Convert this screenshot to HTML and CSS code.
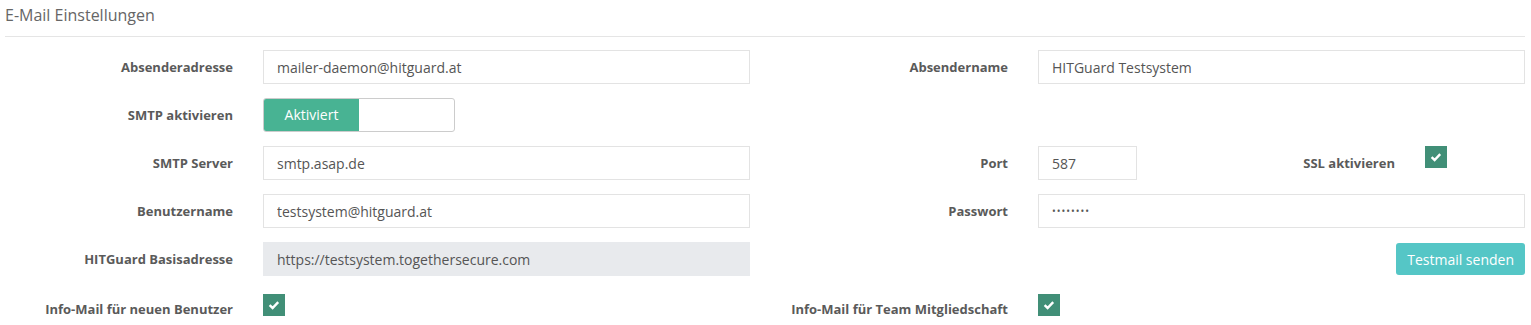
FILE: index.html
```html
<!DOCTYPE html>
<html>
<head>
  <title>E-Mail Einstellungen</title>
  <link rel="stylesheet" href="styles.css">
</head>
<body>

  <!-- Section header -->
  <div class="section-head">
    <h2>E-Mail Einstellungen</h2>
  </div>

  <div class="form">
    <div class="row">
      <div class="half">
        <label class="lbl">Absenderadresse</label>
        <input class="field" type="text" value="mailer-daemon@hitguard.at">
      </div>
      <div class="half">
        <label class="lbl">Absendername</label>
        <input class="field" type="text" value="HITGuard Testsystem">
      </div>
    </div>

    <div class="row">
      <div class="half">
        <label class="lbl">SMTP aktivieren</label>
        <div class="toggle">
          <span class="toggle-on">Aktiviert</span>
          <span class="toggle-off"></span>
        </div>
      </div>
    </div>

    <div class="row">
      <div class="half">
        <label class="lbl">SMTP Server</label>
        <input class="field" type="text" value="smtp.asap.de">
      </div>
      <div class="half">
        <label class="lbl">Port</label>
        <div class="port-line">
          <input class="field port" type="text" value="587">
          <label class="lbl ssl">SSL aktivieren</label>
          <div class="check-cell"><span class="check">
            <svg viewBox="0 0 14 14" width="14" height="14"><path d="M2.6 7.2 L5.6 10 L11.2 4.2" fill="none" stroke="#fff" stroke-width="2.4"/></svg>
          </span></div>
        </div>
      </div>
    </div>

    <div class="row">
      <div class="half">
        <label class="lbl">Benutzername</label>
        <input class="field" type="text" value="testsystem@hitguard.at">
      </div>
      <div class="half">
        <label class="lbl">Passwort</label>
        <input class="field pw" type="password" value="geheim12">
      </div>
    </div>

    <div class="row">
      <div class="half">
        <label class="lbl">HITGuard Basisadresse</label>
        <input class="field readonly" type="text" value="https://testsystem.togethersecure.com" readonly>
      </div>
      <div class="half">
        <span></span>
        <div class="btn-cell"><button class="btn-test">Testmail senden</button></div>
      </div>
    </div>

    <div class="row last">
      <div class="half">
        <label class="lbl">Info-Mail für neuen Benutzer</label>
        <div><span class="check">
          <svg viewBox="0 0 14 14" width="14" height="14"><path d="M2.6 7.2 L5.6 10 L11.2 4.2" fill="none" stroke="#fff" stroke-width="2.4"/></svg>
        </span></div>
      </div>
      <div class="half">
        <label class="lbl">Info-Mail für Team Mitgliedschaft</label>
        <div><span class="check">
          <svg viewBox="0 0 14 14" width="14" height="14"><path d="M2.6 7.2 L5.6 10 L11.2 4.2" fill="none" stroke="#fff" stroke-width="2.4"/></svg>
        </span></div>
      </div>
    </div>
  </div>

</body>
</html>
```

FILE: styles.css
```css
body {
  margin: 0;
  background: #fff;
  font-family: "Open Sans", sans-serif;
  color: #555;
  overflow: hidden;
}

/* Header */
.section-head {
  margin: 0 6px 0 5px;
  border-bottom: 1px solid #e5e5e5;
  padding: 3px 0 9px;
}

.section-head h2 {
  margin: 0;
  font-size: 16px;
  font-weight: 400;
  line-height: 24px;
  color: #666;
}

/* Form grid */
.form {
  padding-top: 13px;
}

.row {
  display: flex;
  gap: 25px;
  margin-bottom: 14px;
}

.row.last {
  margin-top: 18px;
}

.half {
  display: grid;
  grid-template-columns: 263px 487px;
  align-items: center;
}

.half + .half {
  width: 750px;
}

.lbl {
  text-align: right;
  padding-right: 30px;
  font-size: 13px;
  font-weight: 700;
  color: #5a5a5a;
}

.row.last .half {
  align-items: start;
}

.row.last .lbl {
  padding-top: 6px;
  line-height: 18px;
}

.field {
  box-sizing: border-box;
  height: 34px;
  width: 100%;
  border: 1px solid #e3e3e3;
  border-radius: 0;
  padding: 0 13px;
  font-family: "Open Sans", sans-serif;
  font-size: 14px;
  color: #555;
  outline: none;
}

.field.readonly {
  background: #e8eaed;
  border-color: #e8eaed;
}

.field.pw {
  font-size: 10px;
  letter-spacing: 1px;
}

/* Port + SSL line */
.port-line {
  display: flex;
  align-items: center;
}

.field.port {
  width: 99px;
  flex: none;
}

.lbl.ssl {
  flex: 1;
}

.check-cell {
  width: 100px;
  align-self: flex-start;
}

/* Toggle */
.toggle {
  display: flex;
  width: 192px;
  height: 34px;
  box-sizing: border-box;
  border: 1px solid #ccc;
  border-radius: 3px;
  overflow: hidden;
}

.toggle-on {
  width: 95px;
  background: #48b393;
  color: #fff;
  font-size: 14px;
  line-height: 32px;
  text-align: center;
}

/* Checkbox */
.check {
  display: flex;
  align-items: center;
  justify-content: center;
  width: 22px;
  height: 22px;
  background: #418f77;
}

/* Button */
.btn-cell {
  text-align: right;
}

.btn-test {
  height: 32px;
  padding: 0 11px;
  border: none;
  border-radius: 3px;
  background: #55c6c6;
  color: #fff;
  font-family: "Open Sans", sans-serif;
  font-size: 14px;
}
```
